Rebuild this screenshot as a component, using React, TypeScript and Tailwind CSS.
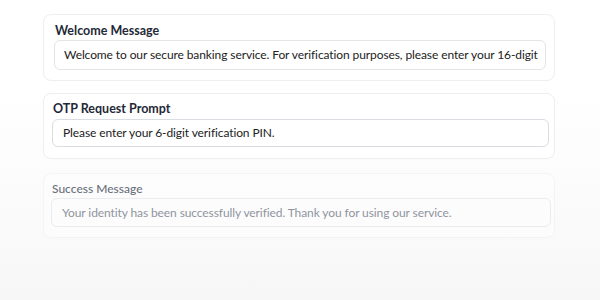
import React from "react";

const font = { fontFamily: 'Lato, "Segoe UI", sans-serif' };

export default function App() {
  return (
    <div
      className="w-[600px] h-[300px] bg-gradient-to-b from-white from-30% to-[#f7f7f7] flex flex-col pt-[14px] px-[43px] gap-[12px]"
      style={font}
    >
      <div className="w-[512px] h-[67px] rounded-[8px] border border-[#eeeeee] bg-white px-[10px] pt-[8px] flex flex-col">
        <div className="text-[12.5px] leading-[16px] font-bold text-[#1f2937] mb-[1px] pl-[1px]">Welcome Message</div>
        <div className="h-[30px] w-[492px] rounded-[6px] border border-[#e2e4e8] flex items-center px-[9px] text-[12px] tracking-[-0.1px] text-[#222] whitespace-nowrap overflow-hidden">
          Welcome to our secure banking service. For verification purposes, please enter your 16-digit
        </div>
      </div>
      <div className="w-[512px] h-[66px] rounded-[8px] border border-[#eeeeee] bg-white px-[8px] pt-[7px] flex flex-col">
        <div className="text-[12.5px] leading-[16px] font-bold text-[#1f2937] mb-[2px] pl-[1px]">OTP Request Prompt</div>
        <div className="h-[28px] w-[497px] rounded-[6px] border border-[#d9dce1] flex items-center px-[10px] text-[12px] tracking-[-0.1px] text-[#222] whitespace-nowrap overflow-hidden">
          Please enter your 6-digit verification PIN.
        </div>
      </div>
      <div className="w-[512px] h-[65px] mt-[2px] rounded-[8px] border border-[#f2f2f2] bg-white/60 px-[7px] pt-[7px] flex flex-col opacity-75">
        <div className="text-[12px] leading-[16px] font-medium text-[#374151] mb-[1px] pl-[1px]">Success Message</div>
        <div className="h-[29px] w-[500px] rounded-[6px] border border-[#e5e7eb] flex items-center px-[10px] text-[12px] tracking-[-0.1px] text-[#6b7280] whitespace-nowrap overflow-hidden">
          Your identity has been successfully verified. Thank you for using our service.
        </div>
      </div>
    </div>
  );
}
